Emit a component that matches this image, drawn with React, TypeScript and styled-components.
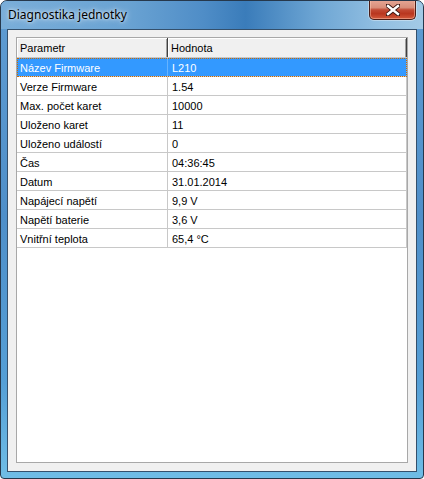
import React from 'react'
import styled, { createGlobalStyle } from 'styled-components'

const GlobalStyle = createGlobalStyle`
  html, body {
    margin: 0;
    padding: 0;
    background: #ffffff;
  }
  * {
    box-sizing: border-box;
  }
`

const rows: [string, string][] = [
  ['Název Firmware', 'L210'],
  ['Verze Firmware', '1.54'],
  ['Max. počet karet', '10000'],
  ['Uloženo karet', '11'],
  ['Uloženo událostí', '0'],
  ['Čas', '04:36:45'],
  ['Datum', '31.01.2014'],
  ['Napájecí napětí', '9,9 V'],
  ['Napětí baterie', '3,6 V'],
  ['Vnitřní teplota', '65,4 °C'],
]

const App = () => {
  const selected = 0

  return (
    <>
      <GlobalStyle />
      <Window>
        <TitleBar>
          <Title>Diagnostika jednotky</Title>
          <CloseButton>
            <svg width="14" height="12" viewBox="0 0 14 12">
              <path
                d="M1.5 1.5 L12.5 10.5 M12.5 1.5 L1.5 10.5"
                stroke="#3a1510"
                strokeWidth="4.2"
                strokeLinecap="square"
              />
              <path
                d="M2 2 L12 10 M12 2 L2 10"
                stroke="#ffffff"
                strokeWidth="2.4"
                strokeLinecap="square"
              />
            </svg>
          </CloseButton>
        </TitleBar>
        <Client>
          <ListBox>
            <HeaderRow>
              <HeaderCell>Parametr</HeaderCell>
              <HeaderCell>Hodnota</HeaderCell>
            </HeaderRow>
            {rows.map(([name, value], i) => (
              <Row key={name} $selected={i === selected}>
                <Cell $selected={i === selected}>{name}</Cell>
                <Cell $selected={i === selected} $last>
                  {value}
                </Cell>
              </Row>
            ))}
          </ListBox>
        </Client>
      </Window>
    </>
  )
}

const Window = styled.div`
  width: 424px;
  height: 479px;
  display: flex;
  flex-direction: column;
  border: 1px solid #26384c;
  border-radius: 7px 7px 4px 4px;
  background: linear-gradient(180deg, #5f9cd2 0%, #4f8fc9 45%, #559fd6 80%, #6fbde6 100%);
  overflow: hidden;
`

const TitleBar = styled.div`
  height: 28px;
  flex: none;
  display: flex;
  justify-content: space-between;
  align-items: flex-start;
  padding-left: 7px;
  background: linear-gradient(
    90deg,
    #7aaed9 0%,
    #6aa3d3 30%,
    #4f8dc7 48%,
    #3a7cba 58%,
    #6ea6d4 75%,
    #93c0e2 90%,
    #a3cae6 100%
  );
`

const Title = styled.div`
  margin-top: 6px;
  font-family: 'Noto Sans', 'Open Sans', sans-serif;
  font-size: 12px;
  line-height: 16px;
  color: #000000;
  text-shadow: 0 0 6px rgba(255, 255, 255, 0.9), 0 0 3px rgba(255, 255, 255, 0.7);
`

const CloseButton = styled.div`
  width: 47px;
  height: 20px;
  margin-right: 7px;
  margin-top: -1px;
  display: flex;
  align-items: center;
  justify-content: center;
  border: 1px solid #4b1c16;
  border-top: none;
  border-radius: 0 0 5px 5px;
  background: linear-gradient(
    180deg,
    #e6a796 0%,
    #d88e7a 40%,
    #c24a34 52%,
    #b9361f 72%,
    #d45a3c 100%
  );
  box-shadow: inset 0 0 0 1px rgba(255, 210, 190, 0.45), 0 0 0 1px rgba(255, 255, 255, 0.35);
`

const Client = styled.div`
  flex: 1;
  margin: 0 6px 6px 6px;
  border: 1px solid #34506c;
  background: #f0f0f0;
  padding: 7px 8px 8px 8px;
  display: flex;
`

const ListBox = styled.div`
  flex: 1;
  border: 1px solid #a8a8a8;
  background: #ffffff;
  overflow: hidden;
  font-family: 'Liberation Sans', Arial, sans-serif;
  font-size: 11px;
  color: #000000;
`

const HeaderRow = styled.div`
  display: grid;
  grid-template-columns: 151px 1fr;
  height: 20px;
  background: #f0f0f0;
  border-bottom: 1px solid #c8c8c8;
`

const HeaderCell = styled.div`
  display: flex;
  align-items: center;
  padding: 1px 0 0 3px;
  border-right: 1px solid #404040;
  box-shadow: inset 1px 1px 0 #ffffff, inset -1px 0 0 #a0a0a0;
`

const Row = styled.div<{ $selected?: boolean }>`
  display: grid;
  grid-template-columns: 151px 1fr;
  height: 19px;
  border-bottom: 1px solid #c8c8c8;
  background: ${(p) => (p.$selected ? '#3399ff' : 'transparent')};
  color: ${(p) => (p.$selected ? '#ffffff' : '#000000')};
  outline: ${(p) => (p.$selected ? '1px dotted #cc6a00' : 'none')};
  outline-offset: -1px;
`

const Cell = styled.div<{ $selected?: boolean; $last?: boolean }>`
  display: flex;
  align-items: center;
  padding: 1px 0 0 ${(p) => (p.$last ? 4 : 3)}px;
  border-right: 1px solid ${(p) => (p.$selected ? '#66b3ff' : '#c8c8c8')};
  white-space: nowrap;
  overflow: hidden;
`

export default App
